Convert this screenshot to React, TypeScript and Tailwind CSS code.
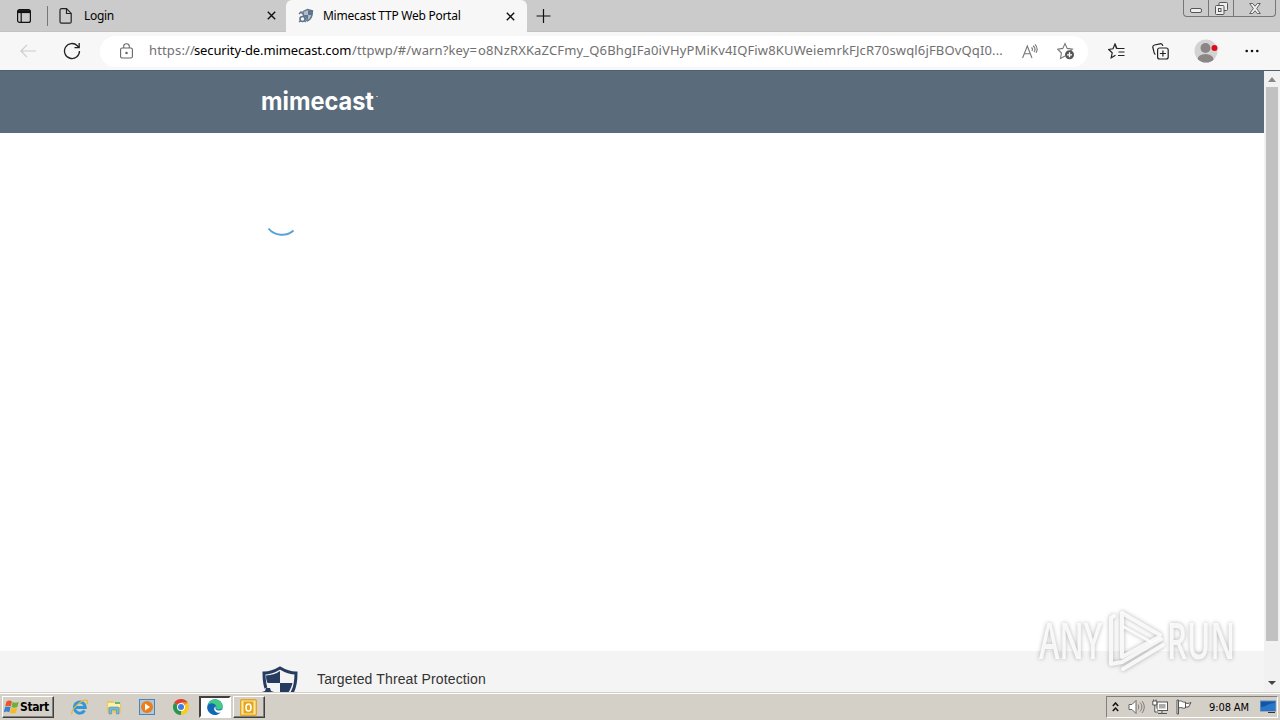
import type { ReactNode } from "react";

const uiFont = "font-['Noto_Sans','Open_Sans',sans-serif]";
const taskFont = "font-['DejaVu_Sans_Condensed','DejaVu_Sans',sans-serif]";

function CloseIcon() {
  return (
    <svg width="9" height="9" viewBox="0 0 9 9" stroke="#111" strokeWidth="1.4">
      <path d="M.8.8l7.4 7.4M8.2.8L.8 8.2" />
    </svg>
  );
}

function ShieldFavicon() {
  return (
    <svg width="16" height="16" viewBox="0 0 16 16" fill="none">
      <path d="M5 3.500L9.500 1.500l5 1.200c0 5-1 8.300-5 10.300C6.500 11 5 8.500 5 3.500z" fill="#aebccb" stroke="#60748c" strokeWidth="1.300" />
      <path d="M10 2v5h4l.5-4zM5.500 7H10v5.500z" fill="#60748c" />
      <circle cx="4.500" cy="11" r="2.500" fill="#f7f7f7" stroke="#60748c" strokeWidth="1.600" />
      <path d="M1 6l2-2 2 2M1 14l1.500-1M8 14l-1.500-1" stroke="#60748c" strokeWidth="1.500" />
    </svg>
  );
}

function TabStrip() {
  return (
    <div className="flex h-8 border-b border-[#c2c2c2] bg-[#cbcbcb]">
      <div className="flex w-[47px] shrink-0 items-center pl-[17px]">
        <svg width="14" height="14" viewBox="0 0 14 14" fill="none" stroke="#111" strokeWidth="1.200">
          <rect x=".6" y=".6" width="12.800" height="12.800" rx="2" />
          <path d="M1 2.600h12" strokeWidth="3" />
          <path d="M4.200 3v10.500" />
        </svg>
      </div>
      <div className="mt-[6px] h-5 w-px bg-[#777]" />
      <div className="flex w-[238px] shrink-0 items-center pl-[11px]">
        <svg width="13" height="16" viewBox="0 0 13 16" fill="none" stroke="#222" strokeWidth="1.200">
          <path d="M2.500.7h5l4.700 4.700v8.300c0 .9-.6 1.500-1.500 1.500H2.500c-.9 0-1.500-.6-1.500-1.500V2.200C1 1.300 1.600.7 2.500.7z" />
          <path d="M7.500.8v4.700h4.600" />
        </svg>
        <span className="ml-3 text-[12px] tracking-[-0.300px]">Login</span>
        <span className="ml-auto mr-[10px]"><CloseIcon /></span>
      </div>
      <div className="flex h-8 w-[241px] shrink-0 items-center rounded-t-md bg-[#f7f7f7] pl-3">
        <ShieldFavicon />
        <span className="ml-[9px] whitespace-nowrap text-[12px] tracking-[-0.260px]">Mimecast TTP Web Portal</span>
        <span className="ml-auto mr-[12px]"><CloseIcon /></span>
      </div>
      <svg className="ml-[9px] mt-[9px]" width="15" height="14" viewBox="0 0 15 14" stroke="#111" strokeWidth="1.200">
        <path d="M7.500 0v14M.5 7h14" />
      </svg>
      <div className="ml-auto mr-1 flex h-[17px] w-[93px] rounded-b-[4px] border border-t-0 border-[#777]">
        <div className="flex w-[25px] items-center justify-center border-r border-[#777] pt-1">
          <svg width="12" height="5" viewBox="0 0 12 5"><rect x=".5" y=".5" width="11" height="4" rx="1.500" fill="#eee" stroke="#555" /></svg>
        </div>
        <div className="flex w-[25px] items-center justify-center border-r border-[#777]">
          <svg width="13" height="13" viewBox="0 0 13 13" fill="#eee" stroke="#555">
            <rect x="4" y=".5" width="8.500" height="8" rx="1" />
            <rect x=".5" y="3.500" width="8.500" height="9" rx="1" />
            <rect x="3.500" y="6.500" width="2.500" height="3" />
          </svg>
        </div>
        <div className="flex grow items-center justify-center">
          <svg width="12" height="11" viewBox="0 0 12 11"><path d="M.7.5h3L6 3.200 8.300.5h3L7.700 5.500l3.600 5h-3L6 7.800 3.700 10.500h-3l3.600-5z" fill="#eee" stroke="#555" strokeWidth=".9" /></svg>
        </div>
      </div>
    </div>
  );
}

function Toolbar() {
  return (
    <div className="flex h-[38px] items-center bg-[#f7f7f7]">
      <svg className="ml-5" width="16" height="14" viewBox="0 0 16 14" fill="none" stroke="#ccc" strokeWidth="1.200">
        <path d="M7 .8L.9 7 7 13.200M1 7h15" />
      </svg>
      <svg className="ml-[27px]" width="18" height="18" viewBox="0 0 18 18" fill="none" stroke="#222" strokeWidth="1.300">
        <path d="M16.500 9A7.500 7.500 0 1 1 14.300 3.700L16 5.500M16.200 1v4.700h-4.700" />
      </svg>
      <div className="ml-[19px] flex h-[31px] w-[988px] shrink-0 items-center rounded-full bg-white pl-5">
        <svg width="13" height="16" viewBox="0 0 13 16" fill="none" stroke="#666" strokeWidth="1.100">
          <rect x=".6" y="5" width="11.800" height="10" rx="1.500" />
          <path d="M3.700 5V3.300a2.800 2.600 0 0 1 5.600 0V5" />
          <circle cx="6.500" cy="10" r=".7" fill="#666" />
        </svg>
        <div className="ml-4 flex w-[856px] whitespace-nowrap text-[13px] text-[#707070]">
          <span className="w-[45px] tracking-[0.150px]">https://</span>
          <span className="w-[158px] tracking-[-0.120px] text-black">security-de.mimecast.com</span>
          <span className="w-[126px] tracking-[0.120px]">/ttpwp/#/warn?key=</span>
          <span className="tracking-[0.150px]">o8NzRXKaZCFmy_Q6BhgIFa0iVHyPMiKv4IQFiw8KUWeiemrkFJcR70swql6jFBOvQqI0...</span>
        </div>
        <svg className="ml-[17px] shrink-0" width="16" height="15" viewBox="0 0 16 15" fill="none" stroke="#777" strokeWidth="1.100">
          <path d="M.6 14L5.300 2l4.700 12M2.300 9.700h6M9.500 3.500c1 .9 1 2.500.4 3.500M11 1.700c2.300 1.800 2.300 4.500 1 6.300M13 .4c2.400 2.500 2.700 5.600 1 8.300" />
        </svg>
        <svg className="ml-[19px] shrink-0" width="18" height="18" viewBox="0 0 18 18" fill="none" stroke="#777" strokeWidth="1.100">
          <path d="M8 14l-4.500 2.500.9-5.500L.8 7.200l5-.8L8 1.500l2.200 4.900 5.200.8-2 2" />
          <circle cx="12.500" cy="12.800" r="4.500" fill="#555" stroke="none" />
          <path d="M12.500 10.300v5M10 12.800h5" stroke="#fff" strokeWidth="1.300" />
        </svg>
      </div>
      <svg className="ml-5" width="17" height="16" viewBox="0 0 17 16" fill="none" stroke="#222" strokeWidth="1.200">
        <path d="M8.500 5.500L7 1 5 5.800.7 6.500l3.500 3.300-1 5L7.500 12.300M7 1l2 4.500h7.500M10.500 9h6M10 12.500h6.500" />
      </svg>
      <svg className="ml-[27px]" width="17" height="17" viewBox="0 0 17 17" fill="none" stroke="#222" strokeWidth="1.200">
        <path d="M3.500 11.500C2 11 2 10 1.500 7L.8 4.500C.6 3 1.200 2.300 2.500 2L8 .8c1.500-.3 2.500.5 2.800 2" />
        <rect x="5.600" y="5" width="10.600" height="11" rx="2" />
        <path d="M10.900 7.500v6M7.900 10.500h6" />
      </svg>
      <svg className="ml-[25px]" width="24" height="24" viewBox="0 0 24 24">
        <clipPath id="face"><circle cx="12" cy="12" r="11.500" /></clipPath>
        <circle cx="12" cy="12" r="11.500" fill="#d3d3d3" />
        <g clipPath="url(#face)" fill="#8b8585"><circle cx="11.500" cy="9" r="5" /><ellipse cx="11.500" cy="20.500" rx="8" ry="5.500" /></g>
        <circle cx="20.500" cy="9" r="3" fill="#e00b1c" />
      </svg>
      <svg className="ml-[27px]" width="14" height="4" viewBox="0 0 14 4" fill="#111">
        <circle cx="1.700" cy="2" r="1.300" /><circle cx="7" cy="2" r="1.300" /><circle cx="12.300" cy="2" r="1.300" />
      </svg>
    </div>
  );
}

function Watermark() {
  return (
    <svg className="absolute left-[1030px] top-[600px] overflow-visible drop-shadow-[0_0_2px_rgba(0,0,0,0.35)]" width="220" height="82" viewBox="0 0 220 82">
      <g fill="#fff" fillOpacity=".85" fontFamily="'Open Sans', 'Liberation Sans Narrow', sans-serif" fontSize="50" fontWeight="600">
        <text x="9" y="59" textLength="63" lengthAdjust="spacingAndGlyphs">ANY</text>
        <text x="137" y="59" textLength="68" lengthAdjust="spacingAndGlyphs">RUN</text>
      </g>
      <g fill="none" stroke="#fff" strokeOpacity=".85" strokeWidth="4" strokeLinejoin="round" strokeLinecap="round">
        <path d="M130 35L92 13v44l37-20" />
        <path d="M84 16l-3 2v46l11-2 39-23M93 69l40-24" />
        <path d="M94 27l27 15" strokeWidth="3" />
      </g>
    </svg>
  );
}

function PageContent() {
  return (
    <div className="flex h-[622px] border-t border-[#50606e]">
      <main className="flex grow flex-col overflow-hidden bg-white">
        <header className="h-[62px] shrink-0 bg-[#5a6b7c] pl-[261px] pt-[14px]">
          <svg className="overflow-visible" width="130" height="36" viewBox="0 0 130 36" fill="#fff" fontFamily="Inter, 'DejaVu Sans', sans-serif">
            <text x="0" y="24.500" fontSize="25" fontWeight="700" textLength="113" lengthAdjust="spacingAndGlyphs">mimecast</text>
            <path d="M115 11.500h2" stroke="#b8c2cc" />
          </svg>
        </header>
        <div className="grow pl-[267px] pt-[93px]">
          <svg width="30" height="12" viewBox="0 0 30 12" fill="none" stroke="#5ba3d6" strokeWidth="2">
            <path d="M1.500 2.500c6 7.500 18 8.500 25 2" />
          </svg>
        </div>
        <footer className="flex h-[41px] shrink-0 items-start overflow-hidden bg-[#f4f4f4] pl-[262px] pt-[15px]">
          <svg className="shrink-0" width="36" height="40" viewBox="0 0 36 40">
            <path d="M2 7C8 7 13 5 18 2 23 5 28 7 34 7c0 14-3 24-16 30C5 31.500 2 21 2 7z" fill="#f4f4f4" stroke="#253c60" strokeWidth="3" />
            <path d="M18 5v12H5.500C4.500 15 4 12 4 9.500 9 9 14 8 18 5zM18 17h12.500c-2 8-6 13-12.500 18z" fill="#253c60" />
            <circle cx="6" cy="28" r="6.500" fill="#f4f4f4" />
            <path d="M0 26l3-1 1-3h4l1 3 3 1v5H0z" fill="#253c60" />
          </svg>
          <span className="ml-[19px] mt-[2px] whitespace-nowrap font-['Liberation_Sans',sans-serif] text-[14px] leading-[22px] tracking-[0.130px] text-[#333]">Targeted Threat Protection</span>
        </footer>
      </main>
      <div className="flex w-4 shrink-0 flex-col items-center bg-[#f1f1f1]">
        <svg className="mt-[6px]" width="8" height="5" viewBox="0 0 8 5"><path d="M4 0l4 5H0z" fill="#888" /></svg>
        <div className="mt-[5px] h-[554px] w-3 bg-[#c1c1c1]" />
        <svg className="mt-[40px]" width="8" height="4" viewBox="0 0 8 4"><path d="M0 0h8L4 4z" fill="#444" /></svg>
      </div>
    </div>
  );
}

function TaskButton({ active, children }: { active?: boolean; children: ReactNode }) {
  return (
    <div className={active
      ? "flex h-[22px] w-8 items-center justify-center border-2 border-b-white border-l-[#404040] border-r-white border-t-[#404040] bg-white"
      : "flex h-[22px] w-8 items-center justify-center border border-b-[#404040] border-l-white border-r-[#404040] border-t-white bg-[#d4d0c8] shadow-[inset_-1px_-1px_#808080]"}>
      {children}
    </div>
  );
}

function Taskbar() {
  return (
    <div className="flex h-7 items-center border-t border-[#d4d0c8] bg-[#d4d0c8] pt-[1px] shadow-[inset_0_1px_#fff]">
      <div className="ml-[2px] flex h-[22px] w-[52px] items-center border border-b-[#404040] border-l-white border-r-[#404040] border-t-white pl-[1px] shadow-[inset_-1px_-1px_#808080]">
        <svg className="shrink-0" width="16" height="16" viewBox="0 0 16 16">
          <path d="M2.500 2.500C5 1 6.500 1.500 8 2.500L6.800 7.500C5 6.500 3.500 6.500 1.200 7.500z" fill="#e9552a" />
          <path d="M8.700 3c2 1 3.600 1 6 0l-1.300 5c-2.400 1-4 1-5.900 0z" fill="#70ae35" />
          <path d="M1 8.300c2.300-1 3.900-1 5.600 0l-1.300 5C3.500 12.200 2 12.200-.2 13.300z" fill="#3b7fd0" />
          <path d="M7.300 8.800c2 1 3.500 1 5.900 0l-1.300 5c-2.400 1-4 1-5.900 0z" fill="#f5bd23" />
        </svg>
        <span className={`${taskFont} text-[12px] font-bold leading-4 tracking-[-0.400px]`}>Start</span>
      </div>
      <div className="ml-[17px] flex items-center gap-[17.600px]">
        <svg width="17" height="17" viewBox="0 0 17 17" fill="none">
          <path d="M13.500 11.500a5.500 5.500 0 1 1 .8-3H4" stroke="#3198d8" strokeWidth="3" />
          <path d="M1 15.500C-1 11 12-1 16 1.500c1 .8.500 2.300-.3 3.500" stroke="#e4b83f" strokeWidth="1.300" />
        </svg>
        <svg width="16" height="16" viewBox="0 0 16 16">
          <path d="M1 2h6l1 2h7v10H1z" fill="#e9c95d" />
          <path d="M2 4h12v4H2z" fill="#fff2a8" /><path d="M9 3h5v2H9z" fill="#63b96e" />
          <path d="M3 15V9.500c0-1 .7-1.500 1.500-1.500h7c.8 0 1.500.5 1.500 1.500V15h-2.500v-4h-5v4z" fill="#76b8dc" stroke="#4c91ba" strokeWidth=".6" />
        </svg>
        <svg width="16" height="16" viewBox="0 0 16 16">
          <rect x=".5" y=".5" width="15" height="15" fill="#a9cae7" stroke="#4f83b3" />
          <circle cx="8" cy="8" r="6" fill="#ef7c16" /><path d="M6 4.500v7l5-3.500z" fill="#fff" />
        </svg>
        <svg width="16" height="16" viewBox="0 0 16 16">
          <path d="M8 8L1.070 4A8 8 0 0 1 14.930 4z" fill="#dd4233" />
          <path d="M8 8L14.930 4A8 8 0 0 1 8 16z" fill="#f9ca26" />
          <path d="M8 8v8A8 8 0 0 1 1.070 4z" fill="#27964e" />
          <path d="M8 4h6.900" stroke="#f9ca26" /><circle cx="8" cy="8" r="4" fill="#fff" /><circle cx="8" cy="8" r="3" fill="#3f7de0" />
        </svg>
      </div>
      <div className="ml-[10px] flex gap-[2px]">
        <TaskButton active>
          <svg width="16" height="16" viewBox="0 0 16 16">
            <circle cx="8" cy="8" r="7.700" fill="#1679bd" />
            <path d="M1 6C2-.5 12-1.500 15 4.500c2 4-1 6-3.500 6-2 0-3-1-2-2.500C9 4.500 4 3.500 1 6z" fill="#42cc83" />
            <path d="M1 6c2.500-2.500 7-2 8 1C6 7 5.500 11 9 13c2 1 4 .5 5.500-.8-3 4.500-9 4.800-12 1.300C0 11 0 8.500 1 6z" fill="#1268b7" />
            <path d="M9 7.500c-1.500 2 0 4 3 4 1.300 0 2.500-.5 3.200-1.300L15 13c-2 1.500-5.500 1-7-1-1.500-2-.7-4 1-4.500z" fill="#fff" />
          </svg>
        </TaskButton>
        <TaskButton>
          <svg width="17" height="17" viewBox="0 0 17 17">
            <rect x=".7" y=".7" width="15.600" height="15.600" rx="1" fill="#ffe8a0" stroke="#e3a526" strokeWidth="1.400" />
            <rect x="3.500" y="2.500" width="10" height="12" fill="#e5a51c" />
            <ellipse cx="8.500" cy="8.500" rx="2.500" ry="3.500" fill="none" stroke="#fff" strokeWidth="1.600" />
          </svg>
        </TaskButton>
      </div>
      <div className="ml-auto mr-[2px] flex h-[22px] w-[172px] items-center border border-b-white border-l-[#808080] border-r-white border-t-[#808080] pl-[5px]">
        <svg width="7" height="10" viewBox="0 0 7 10" fill="none" stroke="#111" strokeWidth="1.500"><path d="M.8 4l2.700-3 2.700 3M.8 9l2.700-3 2.700 3" /></svg>
        <svg className="ml-[9px]" width="17" height="16" viewBox="0 0 17 16" fill="none" stroke="#666">
          <path d="M1 5.500h3l4-4v13l-4-4H1z" fill="#fff" /><path d="M10 5.500c1 1.500 1 3.500 0 5M12 3.500c2.500 3 2.500 6 0 9M14 2c3 4 3 8 0 12" strokeWidth=".8" />
        </svg>
        <svg className="ml-[7px]" width="17" height="16" viewBox="0 0 17 16" fill="#fff" stroke="#555">
          <rect x="5" y="3" width="10.500" height="8.500" /><rect x="7" y="5" width="6.500" height="4.500" fill="#aaa" stroke="none" />
          <path d="M10 12v2M6 14.500h9M.8 2h4v4h-4zM1.500.5V2M4 .5V2M2.800 6v7H6" />
        </svg>
        <svg className="ml-[7px]" width="16" height="16" viewBox="0 0 16 16" fill="#fff" stroke="#555">
          <path d="M2.500 2.500c3-2 4 1.500 7 .5v6c-3 1-4-1.500-7 0zM9.500 4c2 .8 3 .5 5.500-.5L12.500 8H9.500z" /><path d="M1 1h1.500v14H1z" />
        </svg>
        <span className={`${taskFont} ml-[17px] whitespace-nowrap pt-px text-[11px] leading-4 tracking-[-0.100px]`}>9:08 AM</span>
        <svg className="ml-auto mr-[1px]" width="16" height="14" viewBox="0 0 16 14">
          <rect x=".5" y="1" width="15" height="10" fill="#1655a5" stroke="#568bc4" /><path d="M1 7c5 0 7-4 14-4v7H1z" fill="#2877ca" /><path d="M8 12h7v1H8z" fill="#333" />
        </svg>
      </div>
    </div>
  );
}

export default function App() {
  return (
    <div className={`${uiFont} relative flex h-[720px] w-[1280px] flex-col overflow-hidden bg-white text-black`}>
      <TabStrip />
      <Toolbar />
      <PageContent />
      <Taskbar />
      <Watermark />
    </div>
  );
}
